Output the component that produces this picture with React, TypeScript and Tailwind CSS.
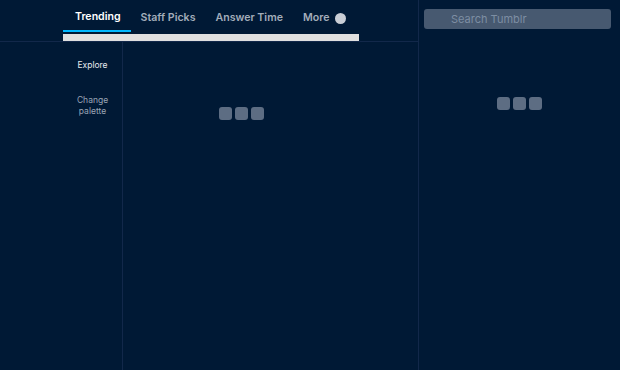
import React from "react";

const tabs = ["Trending", "Staff Picks", "Answer Time"];

function Dots() {
  return (
    <div className="flex gap-[3px]">
      <div className="w-[13px] h-[13px] rounded-[3px] bg-[#5d6d83]" />
      <div className="w-[13px] h-[13px] rounded-[3px] bg-[#5d6d83]" />
      <div className="w-[13px] h-[13px] rounded-[3px] bg-[#5d6d83]" />
    </div>
  );
}

export default function App() {
  return (
    <div
      className="flex h-[370px] w-[620px] overflow-hidden bg-[#001935]"
      style={{ fontFamily: "Inter, 'Liberation Sans', sans-serif" }}
    >
      {/* Colonne principale */}
      <div className="flex flex-col w-[419px] border-r border-[#12284a]">
        <div className="pl-[63px] border-b border-[#12284a]">
          <div className="flex h-[32px] items-stretch">
            <div className="flex items-center pt-[4px] pl-[12px] pr-[10px] border-b-2 border-[#00b8ff] text-[10.6px] font-semibold text-white">
              {tabs[0]}
            </div>
            {tabs.slice(1).map((t) => (
              <div
                key={t}
                className="flex items-center pt-[4px] px-[10px] text-[10.6px] font-semibold text-[#a3adba]"
              >
                {t}
              </div>
            ))}
            <div className="flex items-center gap-[6px] pt-[4px] px-[10px] text-[10.6px] font-semibold text-[#a3adba]">
              More
              <span className="w-[11px] h-[11px] rounded-full bg-[#c9ced6]" />
            </div>
          </div>
          <div className="w-[296px] h-[7px] mt-[2px] bg-[#e0e0e0]" />
        </div>

        <div className="flex flex-1 pl-[63px]">
          <div className="w-[60px] border-r border-[#12284a] flex flex-col items-center text-[8.5px]">
            <div className="mt-[17px] text-[#e6e9ee]">Explore</div>
            <div className="mt-[23px] text-center leading-[11px] text-[#9aa5b5]">
              Change
              <br />
              palette
            </div>
          </div>
          <div className="w-[236px] flex justify-center pt-[65px]">
            <Dots />
          </div>
        </div>
      </div>

      {/* Colonne droite */}
      <div className="flex-1 flex flex-col">
        <div className="px-[5px] pt-[9px] pr-[9px]">
          <div className="h-[20px] rounded-[3px] bg-[#475970] flex items-center pl-[27px] text-[11px] text-[#7d8ea3]">
            Search Tumblr
          </div>
        </div>
        <div className="flex justify-center pt-[68px]">
          <Dots />
        </div>
      </div>
    </div>
  );
}
